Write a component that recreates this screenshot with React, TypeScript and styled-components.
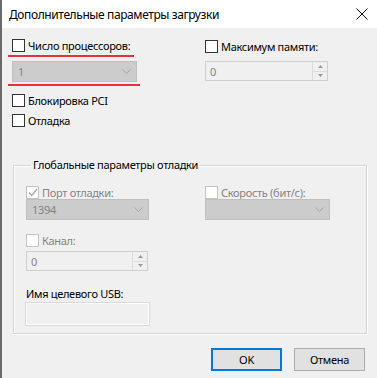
import React from "react";
import styled, { createGlobalStyle } from "styled-components";

const GlobalStyle = createGlobalStyle`
  html, body {
    margin: 0;
    padding: 0;
    background: #f0f0f0;
  }
  * {
    box-sizing: border-box;
  }
`;

const Window = styled.div`
  width: 377px;
  height: 378px;
  background: #f0f0f0;
  border-left: 2px solid #6a6a6a;
  font-family: "Noto Sans", "Segoe UI", sans-serif;
  font-size: 11px;
  letter-spacing: -0.3px;
  color: #000;
  overflow: hidden;
  display: flex;
  flex-direction: column;
`;

const TitleBar = styled.div`
  height: 28px;
  background: #fff;
  display: flex;
  align-items: center;
  justify-content: space-between;
  padding: 0 9px 0 7px;
  font-size: 12px;
  letter-spacing: -0.4px;
  flex-shrink: 0;
`;

const CloseIcon = styled.svg`
  width: 12px;
  height: 12px;
`;

const Content = styled.div`
  padding: 10px 0 0 10px;
  display: flex;
  flex-direction: column;
`;

const TopGrid = styled.div`
  display: grid;
  grid-template-columns: 193px 124px;
`;

const Column = styled.div`
  display: flex;
  flex-direction: column;
`;

const CheckRow = styled.label<{ $disabled?: boolean; $mt?: number }>`
  display: flex;
  align-items: center;
  gap: 3px;
  height: 14px;
  margin-top: ${({ $mt }) => $mt ?? 0}px;
  color: ${({ $disabled }) => ($disabled ? "#838383" : "#000")};
  white-space: nowrap;
`;

const Box = styled.span<{ $disabled?: boolean }>`
  width: 13px;
  height: 13px;
  flex-shrink: 0;
  background: #fff;
  border: 1px solid ${({ $disabled }) => ($disabled ? "#c4c4c4" : "#333")};
  display: flex;
  align-items: center;
  justify-content: center;
`;

const Mark = styled.div<{ $width: number; $mt: number }>`
  width: ${({ $width }) => $width}px;
  height: 2px;
  margin-left: -4px;
  margin-top: ${({ $mt }) => $mt}px;
  background: #e2313f;
`;

const Select = styled.div<{ $width: number; $mt?: number }>`
  width: ${({ $width }) => $width}px;
  height: 21px;
  margin-top: ${({ $mt }) => $mt ?? 0}px;
  background: #cccccc;
  border: 1px solid #bfbfbf;
  display: flex;
  align-items: center;
  justify-content: space-between;
  padding: 0 5px 0 5px;
  color: #838383;
`;

const Chevron = styled.svg`
  width: 9px;
  height: 5px;
`;

const Spin = styled.div<{ $width: number; $mt?: number }>`
  width: ${({ $width }) => $width}px;
  height: 20px;
  margin-top: ${({ $mt }) => $mt ?? 0}px;
  background: #f0f0f0;
  border: 1px solid #cfcfcf;
  display: flex;
  align-items: stretch;
  color: #838383;
`;

const SpinValue = styled.div`
  flex: 1;
  display: flex;
  align-items: center;
  padding-left: 4px;
`;

const SpinButtons = styled.div`
  width: 15px;
  display: flex;
  flex-direction: column;
  border-left: 1px solid #dcdcdc;
`;

const SpinButton = styled.div`
  flex: 1;
  display: flex;
  align-items: center;
  justify-content: center;
  &:first-child {
    border-bottom: 1px solid #dcdcdc;
  }
`;

const Group = styled.fieldset`
  margin: 0;
  margin-left: 1px;
  margin-top: 31px;
  width: 354px;
  border: 1px solid #d5d5d5;
  box-shadow: inset 1px 1px 0 #fff, 1px 1px 0 #fff;
  padding: 13px 0 8px 12px;
`;

const Legend = styled.legend`
  padding: 0 2px;
  margin-left: 5px;
  color: #000;
  line-height: 14px;
`;

const GroupGrid = styled.div`
  display: grid;
  grid-template-columns: 179px 125px;
`;

const FieldLabel = styled.div`
  margin-top: 16px;
  line-height: 14px;
`;

const TextBox = styled.div`
  width: 123px;
  height: 22px;
  margin-top: 2px;
  border: 1px solid #fff;
  box-shadow: 0 0 0 1px #d9d9d9;
  background: #f0f0f0;
`;

const ButtonRow = styled.div`
  display: flex;
  justify-content: flex-end;
  gap: 12px;
  padding-right: 12px;
  margin-top: 14px;
`;

const Button = styled.button<{ $primary?: boolean }>`
  width: 71px;
  height: 23px;
  font-family: inherit;
  font-size: 11px;
  letter-spacing: -0.3px;
  color: #000;
  background: #e1e1e1;
  border: ${({ $primary }) => ($primary ? "2px solid #0078d7" : "1px solid #adadad")};
  padding: 0;
`;

const ChevronDown = () => (
  <Chevron viewBox="0 0 9 5">
    <path d="M0.5 0.5 L4.5 4.5 L8.5 0.5" fill="none" stroke="#a6a6a6" strokeWidth="1" />
  </Chevron>
);

const SpinBox = ({ width, mt, value }: { width: number; mt?: number; value: string }) => (
  <Spin $width={width} $mt={mt}>
    <SpinValue>{value}</SpinValue>
    <SpinButtons>
      <SpinButton>
        <svg width="5" height="3" viewBox="0 0 5 3">
          <path d="M0 3 L2.5 0 L5 3 Z" fill="#9a9a9a" />
        </svg>
      </SpinButton>
      <SpinButton>
        <svg width="5" height="3" viewBox="0 0 5 3">
          <path d="M0 0 L2.5 3 L5 0 Z" fill="#9a9a9a" />
        </svg>
      </SpinButton>
    </SpinButtons>
  </Spin>
);

const App: React.FC = () => {
  return (
    <>
      <GlobalStyle />
      <Window>
        <TitleBar>
          <span>Дополнительные параметры загрузки</span>
          <CloseIcon viewBox="0 0 12 12">
            <path d="M0.5 0.5 L11.5 11.5 M11.5 0.5 L0.5 11.5" stroke="#111" strokeWidth="1" />
          </CloseIcon>
        </TitleBar>
        <Content>
          <TopGrid>
            <Column>
              <CheckRow>
                <Box />
                Число процессоров:
              </CheckRow>
              <Mark $width={126} $mt={3} />
              <Select $width={125} $mt={4}>
                <span>1</span>
                <ChevronDown />
              </Select>
              <Mark $width={132} $mt={2} />
              <CheckRow $mt={7}>
                <Box />
                Блокировка PCI
              </CheckRow>
              <CheckRow $mt={6}>
                <Box />
                Отладка
              </CheckRow>
            </Column>
            <Column>
              <CheckRow $mt={1}>
                <Box />
                Максимум памяти:
              </CheckRow>
              <SpinBox width={123} mt={8} value="0" />
            </Column>
          </TopGrid>
          <Group>
            <Legend>Глобальные параметры отладки</Legend>
            <GroupGrid>
              <Column>
                <CheckRow $disabled>
                  <Box $disabled>
                    <svg width="10" height="9" viewBox="0 0 10 9">
                      <path d="M1 4.5 L3.8 7.5 L9 1" fill="none" stroke="#a8a8a8" strokeWidth="1.3" />
                    </svg>
                  </Box>
                  Порт отладки:
                </CheckRow>
                <Select $width={123} $mt={0}>
                  <span>1394</span>
                  <ChevronDown />
                </Select>
                <CheckRow $disabled $mt={13}>
                  <Box $disabled />
                  Канал:
                </CheckRow>
                <SpinBox width={122} mt={4} value="0" />
                <FieldLabel>Имя целевого USB:</FieldLabel>
                <TextBox />
              </Column>
              <Column>
                <CheckRow $disabled>
                  <Box $disabled />
                  Скорость (бит/с):
                </CheckRow>
                <Select $width={125} $mt={0}>
                  <span />
                  <ChevronDown />
                </Select>
              </Column>
            </GroupGrid>
          </Group>
          <ButtonRow>
            <Button $primary>OK</Button>
            <Button>Отмена</Button>
          </ButtonRow>
        </Content>
      </Window>
    </>
  );
};

export default App;
